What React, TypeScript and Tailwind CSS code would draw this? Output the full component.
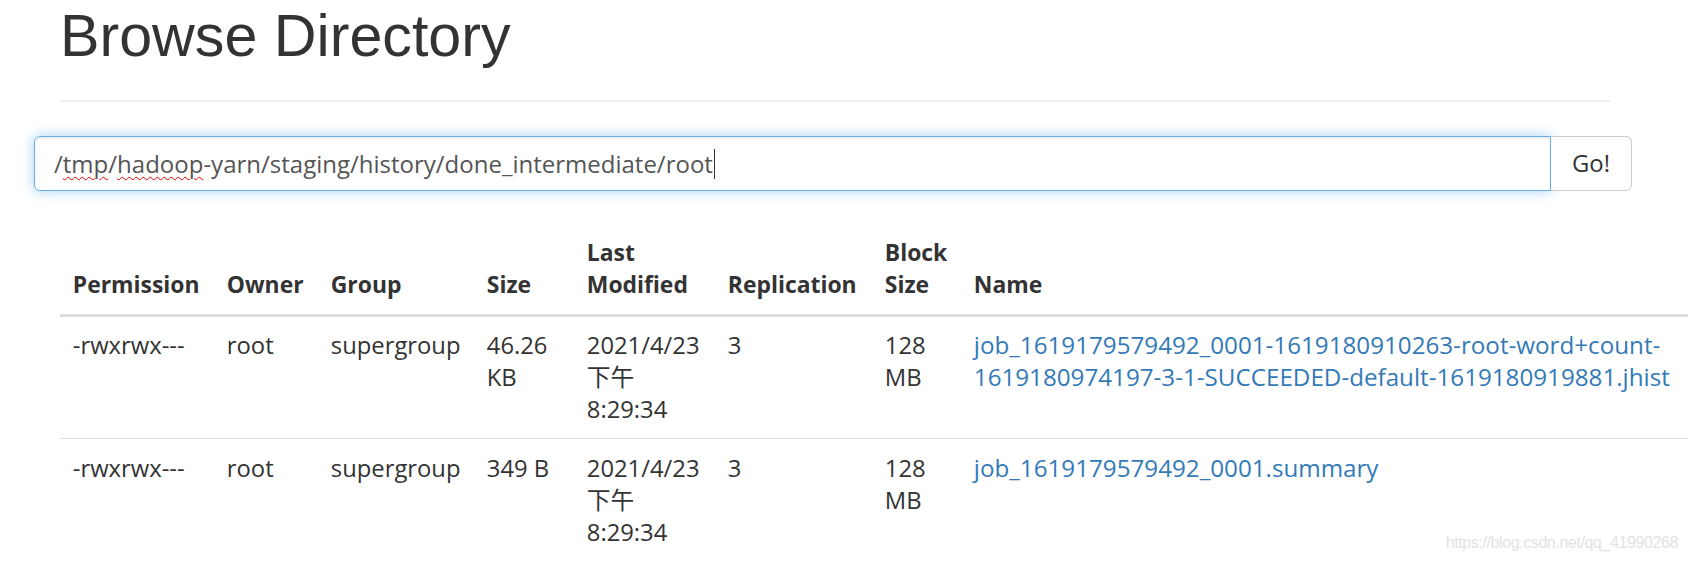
import React from "react";

const rows = [
  {
    perm: "-rwxrwx---",
    owner: "root",
    group: "supergroup",
    size: "46.26 KB",
    date: "2021/4/23 下午 8:29:34",
    rep: "3",
    block: "128 MB",
    name: "job_1619179579492_0001-1619180910263-root-word+count-1619180974197-3-1-SUCCEEDED-default-1619180919881.jhist",
  },
  {
    perm: "-rwxrwx---",
    owner: "root",
    group: "supergroup",
    size: "349 B",
    date: "2021/4/23 下午 8:29:34",
    rep: "3",
    block: "128 MB",
    name: "job_1619179579492_0001.summary",
  },
];

export default function App() {
  const body = "font-['Open_Sans','Noto_Sans_CJK_SC',sans-serif]";
  const td = "p-[12.8px] align-top text-[23.8px]";
  return (
    <div className="relative w-full h-[561px] overflow-hidden bg-white text-[#333333]">
      <div className="pl-[60px] pr-[78px]">
        <h1 className="mt-[4px] font-['Liberation_Sans',Arial,sans-serif] text-[59.2px] leading-[63px] font-normal text-[#333333]">
          Browse Directory
        </h1>
        <div className="mt-[33px] border-t-2 border-[#eeeeee]" />
      </div>

      <div className={`mt-[34px] ml-[34px] w-[1598px] flex h-[55px] ${body}`}>
        <div className="flex-1 flex items-center rounded-l-[6px] border-[1.6px] border-[#66afe9] pl-[19px] text-[24px] text-[#555555] shadow-[inset_0_2px_2px_rgba(0,0,0,0.075),0_0_13px_rgba(102,175,233,0.6)]">
          <span>/</span>
          <span className="underline decoration-wavy decoration-[#e00000] decoration-1 underline-offset-[3px]">tmp</span>
          <span>/</span>
          <span className="underline decoration-wavy decoration-[#e00000] decoration-1 underline-offset-[3px]">hadoop</span>
          <span>-yarn/staging/history/done_intermediate/root</span>
          <span className="ml-[1px] w-[1px] h-[30px] bg-[#333333]" />
        </div>
        <button className="w-[81px] flex items-center justify-center rounded-r-[6px] border-[1.6px] border-l-0 border-[#cccccc] bg-white text-[23.8px] text-[#333333]">
          Go!
        </button>
      </div>

      <table className={`mt-[33px] ml-[60px] table-fixed border-collapse w-[1651px] leading-[32px] ${body}`}>
        <colgroup>
          <col className="w-[154px]" />
          <col className="w-[104px]" />
          <col className="w-[156px]" />
          <col className="w-[100px]" />
          <col className="w-[141px]" />
          <col className="w-[157px]" />
          <col className="w-[89px]" />
          <col className="w-[750px]" />
        </colgroup>
        <thead>
          <tr className="border-b-[3px] border-[#dddddd]">
            {["Permission", "Owner", "Group", "Size", "Last Modified", "Replication", "Block Size", "Name"].map((h) => (
              <th key={h} className="p-[12.8px] text-left align-bottom font-bold text-[22.9px]">
                {h}
              </th>
            ))}
          </tr>
        </thead>
        <tbody>
          {rows.map((r, i) => (
            <tr key={i} className={i === 0 ? "border-b-[1.6px] border-[#dddddd]" : ""}>
              <td className={td}>{r.perm}</td>
              <td className={td}>{r.owner}</td>
              <td className={td}>{r.group}</td>
              <td className={td}>{r.size}</td>
              <td className={td}>{r.date}</td>
              <td className={td}>{r.rep}</td>
              <td className={td}>{r.block}</td>
              <td className="p-[12.8px] align-top text-[24.2px]">
                <a href="#" className="text-[#337ab7]">
                  {r.name}
                </a>
              </td>
            </tr>
          ))}
        </tbody>
      </table>

      <div className="absolute right-[10px] bottom-[6px] font-['Liberation_Sans',Arial,sans-serif] text-[16px] tracking-[-0.4px] text-[#e3e3e3]">
        https://blog.csdn.net/qq_41990268
      </div>
    </div>
  );
}
